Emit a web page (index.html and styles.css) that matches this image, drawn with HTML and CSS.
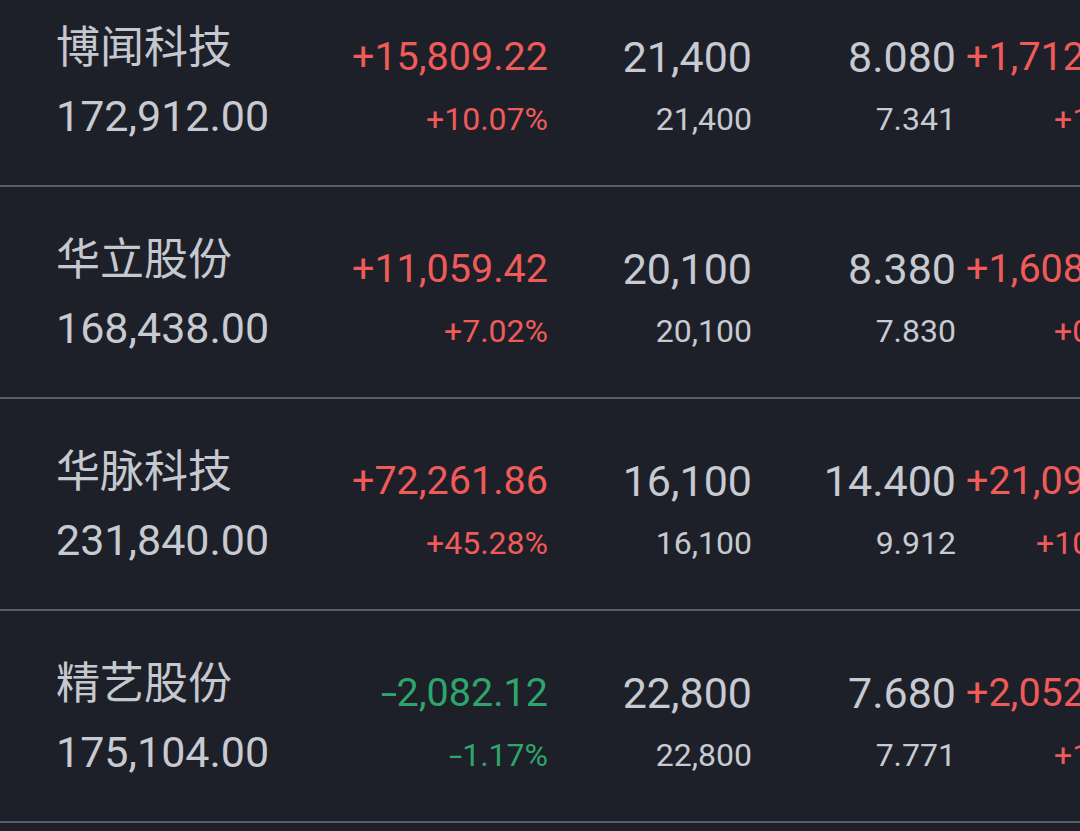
FILE: index.html
```html
<!DOCTYPE html>
<html lang="zh-CN">
<head>
<meta charset="utf-8">
<title>持仓</title>
<link rel="stylesheet" href="styles.css">
</head>
<body>
<div class="viewport">
  <ul class="holdings">
    <li class="row">
      <div class="cell name-cell">
        <span class="name">博闻科技</span>
        <span class="mv">172,912.00</span>
      </div>
      <div class="cell num-cell">
        <span class="big up">+15,809.22</span>
        <span class="small up">+10.07%</span>
      </div>
      <div class="cell num-cell">
        <span class="big">21,400</span>
        <span class="small">21,400</span>
      </div>
      <div class="cell num-cell">
        <span class="big">8.080</span>
        <span class="small">7.341</span>
      </div>
      <div class="cell last-cell">
        <span class="big up">+1,712.00</span>
        <span class="small up">+1.00%</span>
      </div>
    </li>
    <li class="row">
      <div class="cell name-cell">
        <span class="name">华立股份</span>
        <span class="mv">168,438.00</span>
      </div>
      <div class="cell num-cell">
        <span class="big up">+11,059.42</span>
        <span class="small up">+7.02%</span>
      </div>
      <div class="cell num-cell">
        <span class="big">20,100</span>
        <span class="small">20,100</span>
      </div>
      <div class="cell num-cell">
        <span class="big">8.380</span>
        <span class="small">7.830</span>
      </div>
      <div class="cell last-cell">
        <span class="big up">+1,608.00</span>
        <span class="small up">+0.96%</span>
      </div>
    </li>
    <li class="row">
      <div class="cell name-cell">
        <span class="name">华脉科技</span>
        <span class="mv">231,840.00</span>
      </div>
      <div class="cell num-cell">
        <span class="big up">+72,261.86</span>
        <span class="small up">+45.28%</span>
      </div>
      <div class="cell num-cell">
        <span class="big">16,100</span>
        <span class="small">16,100</span>
      </div>
      <div class="cell num-cell">
        <span class="big">14.400</span>
        <span class="small">9.912</span>
      </div>
      <div class="cell last-cell">
        <span class="big up">+21,091.00</span>
        <span class="small up">+10.01%</span>
      </div>
    </li>
    <li class="row">
      <div class="cell name-cell">
        <span class="name">精艺股份</span>
        <span class="mv">175,104.00</span>
      </div>
      <div class="cell num-cell">
        <span class="big down"><span class="sign">-</span>2,082.12</span>
        <span class="small down"><span class="sign">-</span>1.17%</span>
      </div>
      <div class="cell num-cell">
        <span class="big">22,800</span>
        <span class="small">22,800</span>
      </div>
      <div class="cell num-cell">
        <span class="big">7.680</span>
        <span class="small">7.771</span>
      </div>
      <div class="cell last-cell">
        <span class="big up">+2,052.00</span>
        <span class="small up">+1.19%</span>
      </div>
    </li>
    <li class="row">
      <div class="cell name-cell">
        <span class="name">浙江建投</span>
        <span class="mv">150,300.00</span>
      </div>
      <div class="cell num-cell">
        <span class="big up">+3,120.00</span>
        <span class="small up">+2.12%</span>
      </div>
      <div class="cell num-cell">
        <span class="big">15,000</span>
        <span class="small">15,000</span>
      </div>
      <div class="cell num-cell">
        <span class="big">10.020</span>
        <span class="small">9.812</span>
      </div>
      <div class="cell last-cell">
        <span class="big up">+1,350.00</span>
        <span class="small up">+0.91%</span>
      </div>
    </li>
  </ul>
</div>
</body>
</html>
```

FILE: styles.css
```css
html, body {
  margin: 0;
  padding: 0;
  background: #1d2029;
}

body {
  width: 1080px;
  height: 831px;
  overflow: hidden;
  font-family: Roboto, "Noto Sans CJK SC", sans-serif;
  color: #c7cad0;
}

.viewport {
  width: 1080px;
  height: 831px;
  overflow: hidden;
}

.holdings {
  list-style: none;
  margin: -25px 0 0 0;
  padding: 0;
  width: 1158px;
}

.row {
  display: grid;
  grid-template-columns: 292px 200px 204px 204px 202px;
  box-sizing: border-box;
  height: 212px;
  padding: 38px 0 0 56px;
  border-bottom: 2px solid #585c66;
}

.cell {
  display: flex;
  flex-direction: column;
  white-space: nowrap;
}

.name-cell {
  align-items: flex-start;
}

.name {
  font-family: Roboto, "Noto Sans CJK SC", sans-serif;
  font-size: 44px;
  line-height: 70px;
  color: #c5c8ce;
}

.mv {
  font-size: 43px;
  line-height: 66px;
}

.num-cell {
  align-items: flex-end;
}

.last-cell {
  align-items: flex-start;
  padding-left: 10px;
}

.last-cell .small {
  align-self: flex-end;
}

.big {
  font-size: 43px;
  line-height: 88px;
}

.big.up,
.big.down {
  font-size: 39.5px;
}

.small {
  font-size: 32px;
  line-height: 36px;
}

.sign {
  display: inline-block;
  padding: 0 0.06em 0 0.04em;
  transform: scaleX(1.5);
}

.up {
  color: #f05b59;
}

.down {
  color: #2ea66b;
}
```
